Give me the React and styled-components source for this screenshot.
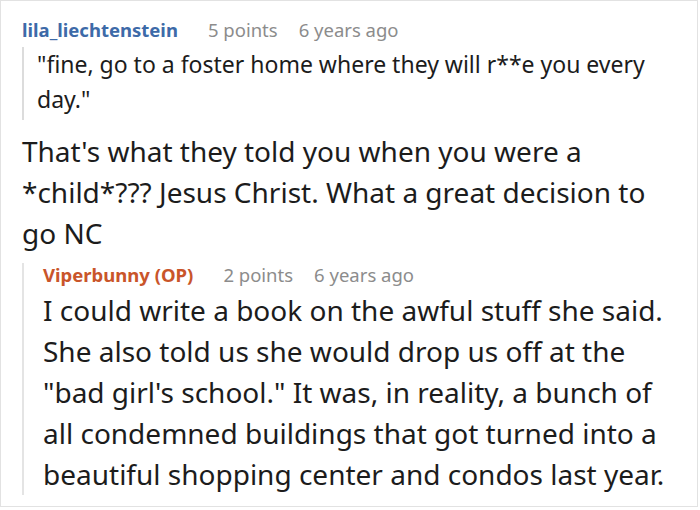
import React from "react";
import styled, { createGlobalStyle } from "styled-components";

const GlobalStyle = createGlobalStyle`
  body {
    margin: 0;
    background: #fff;
    font-family: "Noto Sans", "Open Sans", sans-serif;
    color: #1c1c1c;
  }
`;

const Frame = styled.div`
  box-sizing: border-box;
  width: 698px;
  height: 507px;
  border: 1px solid #e2e2e2;
  padding: 17px 27px 0 21px;
  overflow: hidden;
`;

const Tagline = styled.div`
  display: flex;
  align-items: baseline;
  font-size: 18.5px;
  line-height: 24px;
  white-space: nowrap;
`;

const Author = styled.span`
  font-weight: 700;
  color: ${(p) => (p.$op ? "#c9552a" : "#3d6aa8")};
`;

const Score = styled.span`
  color: #8c8c8c;
  margin-left: 30px;
`;

const Time = styled.span`
  color: #8c8c8c;
  margin-left: 21px;
`;

const Quote = styled.blockquote`
  margin: 5px 0 0;
  padding: 0 0 3px 13px;
  border-left: 2px solid #dcdcdc;
  font-size: 23px;
  line-height: 35px;
`;

const Body = styled.p`
  margin: ${(p) => p.$top || 0}px 0 0;
  font-size: 28px;
  line-height: 41px;
`;

const Child = styled.div`
  margin-top: 9px;
  padding-left: 19px;
  border-left: 2px solid #e4e4e4;
`;

const Comment = ({ author, op, points, age, children }) => (
  <>
    <Tagline>
      <Author $op={op}>{author}</Author>
      <Score>{points} points</Score>
      <Time>{age}</Time>
    </Tagline>
    {children}
  </>
);

export default function App() {
  return (
    <Frame>
      <GlobalStyle />
      <Comment author="lila_liechtenstein" points={5} age="6 years ago">
        <Quote>
          "fine, go to a foster home where they will r**e you every day."
        </Quote>
        <Body $top={11}>
          That's what they told you when you were a *child*??? Jesus Christ.
          What a great decision to go NC
        </Body>
        <Child>
          <Comment author="Viperbunny (OP)" op points={2} age="6 years ago">
            <Body $top={3}>
              I could write a book on the awful stuff she said. She also told us
              she would drop us off at the "bad girl's school." It was, in
              reality, a bunch of all condemned buildings that got turned into a
              beautiful shopping center and condos last year.
            </Body>
          </Comment>
        </Child>
      </Comment>
    </Frame>
  );
}
